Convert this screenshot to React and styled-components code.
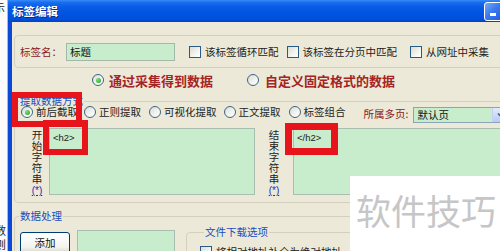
import React from 'react';
import styled, { createGlobalStyle } from 'styled-components';

const Global = createGlobalStyle`
  html, body { margin: 0; padding: 0; background: #fff; }
  body { font-family: "Noto Sans CJK SC", "Noto Sans", sans-serif; }
  * { box-sizing: border-box; }
`;

const Screen = styled.div`
  position: relative;
  width: 500px;
  height: 251px;
  overflow: hidden;
  display: flex;
  align-items: flex-start;
`;

const BackStrip = styled.div`
  flex: none;
  width: 8px;
  height: 251px;
  background: #fbfbfb;
  border-right: 1px solid #b8b8b8;
  overflow: hidden;
  display: flex;
  flex-direction: column;
  justify-content: space-between;
  font-size: 11px;
  line-height: 14px;
  color: #222;
`;

const BackGlyph = styled.div`
  margin-left: ${p => p.$ml}px;
  white-space: nowrap;
`;

const Window = styled.div`
  flex: none;
  width: 545px;
  display: flex;
  flex-direction: column;
`;

const TitleBar = styled.div`
  flex: none;
  height: 22px;
  display: flex;
  align-items: center;
  padding: 0 2px 0 4px;
  background: linear-gradient(to bottom, #3a8cf6 0%, #1a6ff0 10%, #0a5ce6 30%, #0054e3 60%, #0050dc 85%, #0040c8 100%);
`;

const TitleText = styled.div`
  flex: 1;
  color: #fff;
  font-size: 11.5px;
  font-weight: 700;
  text-shadow: 1px 1px 0 #0a2a90;
`;

const CapButton = styled.div`
  width: 21px;
  height: 19px;
  margin-left: 2px;
  border: 1px solid #fff;
  border-radius: 3px;
  background: linear-gradient(135deg, #7aa8f8 0%, #3a78f0 45%, #2258e0 100%);
  display: flex;
  align-items: flex-end;
  padding: 0 0 4px 5px;
`;

const MinBar = styled.div`
  width: 6px;
  height: 3px;
  background: #fff;
`;

const Body = styled.div`
  flex: none;
  height: 240px;
  background: #ece9d8;
  border-left: 4px solid #0a48d8;
  padding: 13px 8px 0 2px;
  overflow: hidden;
`;

const TopGroup = styled.div`
  height: 33px;
  border: 1px solid #d3d0bf;
  border-radius: 4px;
  display: flex;
  align-items: center;
  padding-left: 5px;
  font-size: 10.5px;
`;

const RedLabel = styled.span`
  flex: none;
  color: #8b1a1a;
  font-size: 10.5px;
  margin-right: ${p => p.$mr || 0}px;
  margin-left: ${p => p.$ml || 0}px;
  white-space: nowrap;
`;

const GreenInput = styled.div`
  flex: none;
  width: 109px;
  height: 18px;
  background: #c7edcc;
  border: 1px solid #a3b8a8;
  font-size: 10.5px;
  line-height: 16px;
  padding-left: 3px;
  color: #111;
`;

const CheckItem = styled.label`
  flex: none;
  display: flex;
  align-items: center;
  margin-left: ${p => p.$ml || 0}px;
  font-size: 10.5px;
  color: #222;
  white-space: nowrap;
`;

const CheckBox = styled.span`
  flex: none;
  display: inline-block;
  width: 12px;
  height: 12px;
  margin-right: 4px;
  border: 1px solid #2a5b86;
  background: linear-gradient(135deg, #dcdcd4 0%, #f4f4f0 60%, #fff 100%);
`;

const RadioRow = styled.div`
  height: 24px;
  display: flex;
  align-items: center;
  padding-left: 78px;
`;

const RadioItem = styled.label`
  flex: none;
  display: flex;
  align-items: center;
  margin-left: ${p => p.$ml || 0}px;
  white-space: nowrap;
  font-size: ${p => (p.$big ? 13 : 10.5)}px;
  font-weight: ${p => (p.$big ? 700 : 400)};
  color: ${p => (p.$big ? '#a52424' : '#222')};
`;

const Radio = styled.span`
  flex: none;
  width: 12px;
  height: 12px;
  border-radius: 50%;
  border: 1px solid #3e6488;
  background: linear-gradient(135deg, #dcdcd4 0%, #f4f4f0 60%, #fff 100%);
  margin-right: ${p => p.$gap || 3}px;
  display: flex;
  align-items: center;
  justify-content: center;
  &::after {
    content: '';
    display: ${p => (p.$on ? 'block' : 'none')};
    width: 5px;
    height: 5px;
    border-radius: 50%;
    background: radial-gradient(circle at 35% 35%, #7ee07e, #1c9a1c);
  }
`;

const Group = styled.fieldset`
  margin: ${p => p.$mt || 0}px 0 0 ${p => p.$ml || 0}px;
  padding: 0 0 ${p => p.$pb || 0}px ${p => p.$pl || 0}px;
  border: 1px solid #d3d0bf;
  border-radius: 4px;
  min-width: 0;
  width: ${p => (p.$w ? p.$w + 'px' : 'auto')};
  flex: none;
`;

const Legend = styled.legend`
  margin-left: ${p => p.$ml || 4}px;
  padding: 0 1px;
  font-size: 10.5px;
  line-height: 12px;
  color: #1a4cc0;
  white-space: nowrap;
`;

const ModeRow = styled.div`
  display: flex;
  align-items: flex-start;
  margin-top: -1px;
  padding-left: 6px;
`;

const ModeItem = styled(RadioItem)`
  height: 12px;
  line-height: 12px;
`;

const Select = styled.div`
  flex: none;
  margin-top: 1px;
  margin-left: 5px;
  width: 96px;
  height: 16px;
  background: #c7edcc;
  border: 1px solid #8aa4b8;
  display: flex;
  font-size: 10.5px;
  line-height: 14px;
`;

const SelectText = styled.div`
  flex: 1;
  padding-left: 3px;
  color: #111;
`;

const SelectArrow = styled.div`
  width: 16px;
  background: linear-gradient(to bottom, #e2ebfd, #b7cbf8);
  border-left: 1px solid #c3d3f5;
  display: flex;
  align-items: center;
  justify-content: center;
`;

const PaneRow = styled.div`
  display: flex;
  margin-top: 5px;
  padding-left: 10px;
`;

const Pane = styled.div`
  display: flex;
  flex: none;
`;

const LabelCol = styled.div`
  flex: none;
  width: ${p => p.$w}px;
  display: flex;
  flex-direction: column;
  align-items: center;
  padding-top: 1px;
`;

const VText = styled.div`
  width: 11px;
  font-size: 10.5px;
  line-height: 11px;
  color: #222;
  text-align: center;
  word-break: break-all;
`;

const StarLink = styled.a`
  margin-top: 2px;
  font-family: "Liberation Sans", sans-serif;
  font-size: 10px;
  line-height: 10px;
  color: #2a2ab8;
  text-decoration: underline;
  white-space: nowrap;
`;

const TextBox = styled.div`
  flex: none;
  width: ${p => p.$w}px;
  height: 67px;
  background: #c7edcc;
  border: 1px solid #a9bdb0;
  padding: 3px 0 0 3px;
  font-family: "Liberation Sans", sans-serif;
  font-size: 9.5px;
  line-height: 12px;
  color: #222;
`;

const BottomRow = styled.div`
  display: flex;
  align-items: flex-start;
  margin-top: 8px;
  padding-left: 5px;
`;

const XPButton = styled.div`
  flex: none;
  margin-top: 2px;
  width: 50px;
  height: 22px;
  border: 1px solid #003c74;
  border-radius: 3px;
  background: linear-gradient(to bottom, #ffffff 0%, #f4f4ee 70%, #d8d2c6 100%);
  font-size: 10.5px;
  line-height: 20px;
  text-align: center;
  color: #111;
`;

const GreenBox = styled.div`
  flex: none;
  margin-left: 7px;
  width: 98px;
  height: 30px;
  background: #c7edcc;
  border: 1px solid #a9bdb0;
`;

const CheckRow = styled.div`
  margin-top: 6px;
  display: flex;
`;

const RedFrame = styled.div`
  position: absolute;
  left: ${p => p.$x}px;
  top: ${p => p.$y}px;
  width: ${p => p.$w}px;
  height: ${p => p.$h}px;
  border: ${p => p.$b}px solid #e8141c;
  pointer-events: none;
`;

const Watermark = styled.div`
  position: absolute;
  left: 350px;
  top: 176px;
  width: 150px;
  height: 75px;
  background: #fff;
  padding: 14px 0 0 6px;
  font-size: 35px;
  line-height: 40px;
  color: #c6c6c6;
  white-space: nowrap;
`;

export default function App() {
  return (
    <>
      <Global />
      <Screen>
        <BackStrip>
          <BackGlyph $ml={-6}>示</BackGlyph>
          <BackGlyph $ml={-5}>数<br />则</BackGlyph>
        </BackStrip>
        <Window>
          <TitleBar>
            <TitleText>标签编辑</TitleText>
            <CapButton><MinBar /></CapButton>
            <CapButton />
            <CapButton />
          </TitleBar>
          <Body>
            <TopGroup>
              <RedLabel $mr={4}>标签名：</RedLabel>
              <GreenInput>标题</GreenInput>
              <CheckItem $ml={14}><CheckBox />该标签循环匹配</CheckItem>
              <CheckItem $ml={8}><CheckBox />该标签在分页中匹配</CheckItem>
              <CheckItem $ml={13}><CheckBox />从网址中采集</CheckItem>
            </TopGroup>
            <RadioRow>
              <RadioItem $big><Radio $on $gap={5} />通过采集得到数据</RadioItem>
              <RadioItem $big $ml={34}><Radio $gap={6} />自定义固定格式的数据</RadioItem>
            </RadioRow>
            <Group $mt={3} $pb={6}>
              <Legend>提取数据方式</Legend>
              <ModeRow>
                <ModeItem><Radio $on />前后截取</ModeItem>
                <ModeItem $ml={6}><Radio />正则提取</ModeItem>
                <ModeItem $ml={8}><Radio />可视化提取</ModeItem>
                <ModeItem $ml={7}><Radio />正文提取</ModeItem>
                <ModeItem $ml={8}><Radio />标签组合</ModeItem>
                <RedLabel $ml={18}>所属多页:</RedLabel>
                <Select>
                  <SelectText>默认页</SelectText>
                  <SelectArrow>
                    <svg width="8" height="6" viewBox="0 0 8 6">
                      <path d="M1 1.5 L4 4.5 L7 1.5" fill="none" stroke="#4d6185" strokeWidth="1.6" />
                    </svg>
                  </SelectArrow>
                </Select>
              </ModeRow>
              <PaneRow>
                <Pane>
                  <LabelCol $w={24}>
                    <VText>开始字符串</VText>
                    <StarLink>(*)</StarLink>
                  </LabelCol>
                  <TextBox $w={206}>&lt;h2&gt;</TextBox>
                </Pane>
                <Pane>
                  <LabelCol $w={38}>
                    <VText>结束字符串</VText>
                    <StarLink>(*)</StarLink>
                  </LabelCol>
                  <TextBox $w={220}>&lt;/h2&gt;</TextBox>
                </Pane>
              </PaneRow>
            </Group>
            <Group $mt={7} $pb={20}>
              <Legend>数据处理</Legend>
              <BottomRow>
                <XPButton>添加</XPButton>
                <GreenBox />
                <Group $mt={-4} $ml={11} $w={300} $pl={13} $pb={20}>
                  <Legend>文件下载选项</Legend>
                  <CheckRow>
                    <CheckItem><CheckBox />将相对地址补全为绝对地址</CheckItem>
                  </CheckRow>
                </Group>
              </BottomRow>
            </Group>
          </Body>
        </Window>
        <RedFrame $x={12} $y={92} $w={70} $h={35} $b={6} />
        <RedFrame $x={43} $y={120} $w={45} $h={35} $b={6} />
        <RedFrame $x={285} $y={123} $w={53} $h={32} $b={7} />
        <Watermark>软件技巧</Watermark>
      </Screen>
    </>
  );
}
